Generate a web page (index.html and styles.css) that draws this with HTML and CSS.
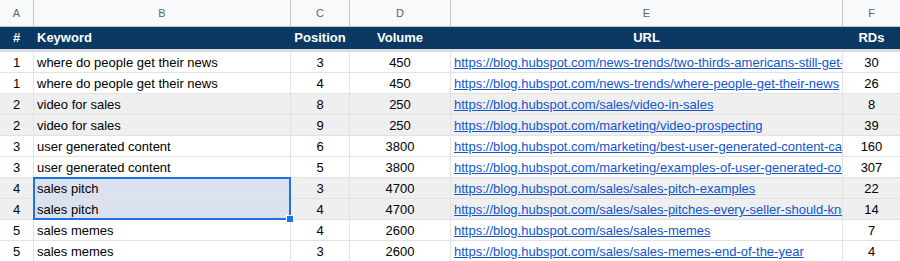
FILE: index.html
```html
<!DOCTYPE html>
<html>
<head>
<meta charset="utf-8">
<link rel="stylesheet" href="styles.css">
</head>
<body>
<div class="sheet">
  <div class="row letters">
    <div class="c">A</div><div class="c">B</div><div class="c">C</div><div class="c">D</div><div class="c">E</div><div class="c">F</div>
  </div>
  <div class="row head">
    <div class="c ctr">#</div><div class="c">Keyword</div><div class="c ctr">Position</div><div class="c ctr">Volume</div><div class="c ctr">URL</div><div class="c ctr">RDs</div>
  </div>
  <div class="freeze"></div>
  <div class="row data">
    <div class="c ctr">1</div><div class="c">where do people get their news</div><div class="c ctr">3</div><div class="c ctr">450</div><div class="c"><a href="#">https://blog.hubspot.com/news-trends/two-thirds-americans-still-get-news-from-traditional-media</a></div><div class="c ctr">30</div>
  </div>
  <div class="row data">
    <div class="c ctr">1</div><div class="c">where do people get their news</div><div class="c ctr">4</div><div class="c ctr">450</div><div class="c"><a href="#">https://blog.hubspot.com/news-trends/where-people-get-their-news</a></div><div class="c ctr">26</div>
  </div>
  <div class="row data alt">
    <div class="c ctr">2</div><div class="c">video for sales</div><div class="c ctr">8</div><div class="c ctr">250</div><div class="c"><a href="#">https://blog.hubspot.com/sales/video-in-sales</a></div><div class="c ctr">8</div>
  </div>
  <div class="row data alt">
    <div class="c ctr">2</div><div class="c">video for sales</div><div class="c ctr">9</div><div class="c ctr">250</div><div class="c"><a href="#">https://blog.hubspot.com/marketing/video-prospecting</a></div><div class="c ctr">39</div>
  </div>
  <div class="row data">
    <div class="c ctr">3</div><div class="c">user generated content</div><div class="c ctr">6</div><div class="c ctr">3800</div><div class="c"><a href="#">https://blog.hubspot.com/marketing/best-user-generated-content-campaigns</a></div><div class="c ctr">160</div>
  </div>
  <div class="row data">
    <div class="c ctr">3</div><div class="c">user generated content</div><div class="c ctr">5</div><div class="c ctr">3800</div><div class="c"><a href="#">https://blog.hubspot.com/marketing/examples-of-user-generated-content</a></div><div class="c ctr">307</div>
  </div>
  <div class="row data alt">
    <div class="c ctr">4</div><div class="c sel">sales pitch</div><div class="c ctr">3</div><div class="c ctr">4700</div><div class="c"><a href="#">https://blog.hubspot.com/sales/sales-pitch-examples</a></div><div class="c ctr">22</div>
  </div>
  <div class="row data alt">
    <div class="c ctr">4</div><div class="c sel">sales pitch</div><div class="c ctr">4</div><div class="c ctr">4700</div><div class="c"><a href="#">https://blog.hubspot.com/sales/sales-pitches-every-seller-should-know</a></div><div class="c ctr">14</div>
  </div>
  <div class="row data">
    <div class="c ctr">5</div><div class="c">sales memes</div><div class="c ctr">4</div><div class="c ctr">2600</div><div class="c"><a href="#">https://blog.hubspot.com/sales/sales-memes</a></div><div class="c ctr">7</div>
  </div>
  <div class="row data">
    <div class="c ctr">5</div><div class="c">sales memes</div><div class="c ctr">3</div><div class="c ctr">2600</div><div class="c"><a href="#">https://blog.hubspot.com/sales/sales-memes-end-of-the-year</a></div><div class="c ctr">4</div>
  </div>
  <div class="selection"><span class="handle"></span></div>
</div>
</body>
</html>
```
FILE: styles.css
```css
html, body {
  margin: 0;
  padding: 0;
  background: #ffffff;
}
body {
  font-family: "Liberation Sans", Arial, sans-serif;
  font-size: 13px;
  color: #000;
  overflow: hidden;
}
.sheet {
  position: relative;
  width: 900px;
}
.row {
  display: grid;
  grid-template-columns: 33px 256px 58px 100px 391px 57px;
  column-gap: 1px;
}
.c {
  overflow: hidden;
  white-space: nowrap;
  padding: 0 3px;
}
.ctr {
  text-align: center;
}
.letters {
  background: #c4c7c5;
  padding-bottom: 1px;
}
.letters .c {
  background: #f8f9fa;
  color: #5f6368;
  font-size: 11px;
  height: 26px;
  line-height: 26px;
  text-align: center;
}
.head {
  background: #0b3963;
}
.head .c {
  background: #0b3963;
  color: #ffffff;
  font-weight: bold;
  height: 22px;
  line-height: 22px;
}
.freeze {
  height: 3px;
  background: #dadce0;
}
.data {
  background: #e2e2e2;
  padding-bottom: 1px;
}
.data .c {
  background: #ffffff;
  height: 20px;
  box-sizing: border-box;
  padding-top: 1px;
  line-height: 19px;
}
.data.alt .c {
  background: #efefef;
}
.data .c.sel {
  background: #dbe1ee;
}
.data a {
  color: #1155cc;
  text-decoration: underline;
}
.selection {
  position: absolute;
  left: 33px;
  top: 177px;
  width: 258px;
  height: 43px;
  box-sizing: border-box;
  border: 2px solid #1a73e8;
  pointer-events: none;
}
.handle {
  position: absolute;
  right: -5px;
  bottom: -5px;
  width: 6px;
  height: 6px;
  background: #1a73e8;
  border: 1px solid #ffffff;
}
```
